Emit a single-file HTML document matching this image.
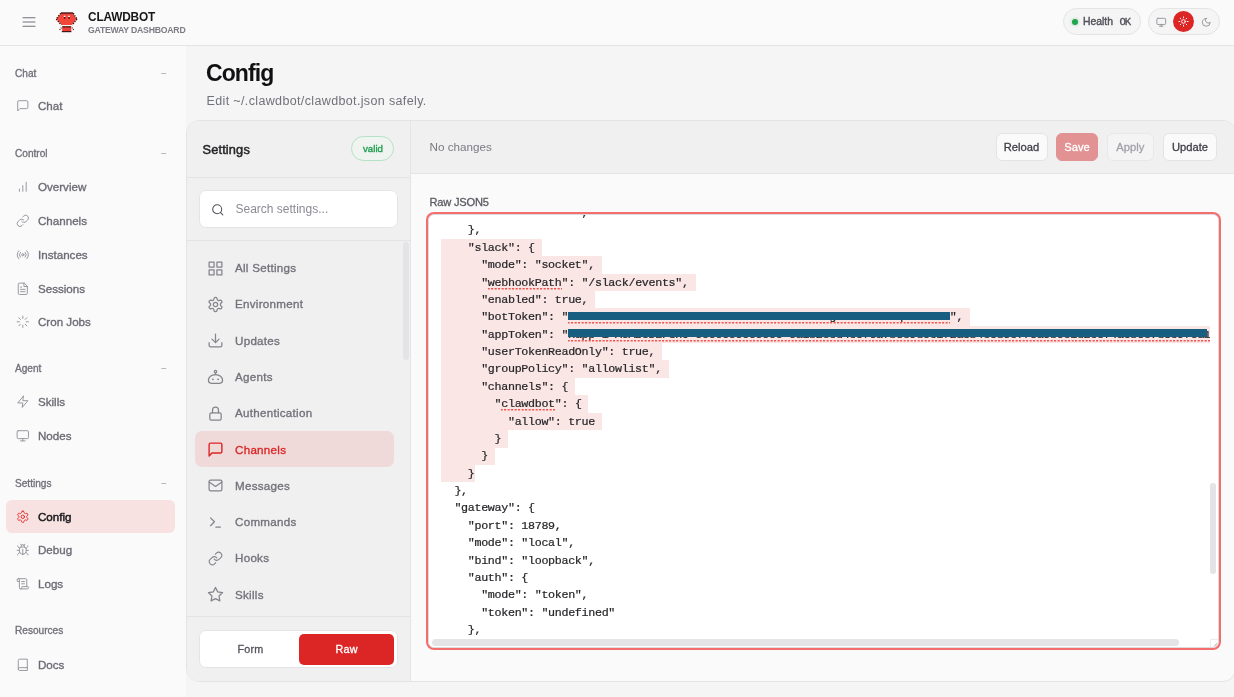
<!DOCTYPE html>
<html lang="en">
<head>
<meta charset="utf-8">
<title>Clawdbot Control</title>
<style>
*{box-sizing:border-box;margin:0;padding:0}
html,body{width:1234px;height:697px;overflow:hidden}
body{position:relative;background:#f5f5f5;font-family:"Liberation Sans",sans-serif;color:#3f3f46;-webkit-font-smoothing:antialiased}
#app{position:absolute;left:0;top:0;width:1234px;height:697px;overflow:hidden;will-change:transform}
.abs{position:absolute}
.t{position:absolute;white-space:nowrap;line-height:1;transform-origin:0 50%;transform:scaleX(var(--sx,1))}
.md{font-weight:normal!important;-webkit-text-stroke:.33px currentColor}
svg{display:block;overflow:visible}
.ic{position:absolute;fill:none;stroke:#71717a;stroke-width:1.6;stroke-linecap:round;stroke-linejoin:round;opacity:.78}

/* top bar */
#topbar{left:0;top:0;width:1234px;height:46px;background:#fafafa;border-bottom:1px solid #e4e4e7}
/* left nav */
#nav{left:0;top:46px;width:186px;height:651px;background:#fafafa}
.grp{letter-spacing:.1px;font-size:10.1px;font-weight:bold;color:#71717a;left:15px;letter-spacing:0}
.minus{font-size:10px;color:#a1a1aa;left:161px}
.ni{font-size:11.6px;font-weight:bold;color:#6b6b74;left:38px}
.nic{left:16px;width:13.6px;height:13.6px;stroke-width:1.6}
#nav-active{left:6.2px;top:454px;width:168.8px;height:33px;border-radius:6px;background:#f7e1e1}

/* card */
#card{left:186px;top:120px;width:1050px;height:562px;border:1px solid #e4e4e7;border-radius:13px;background:#fafafa;overflow:hidden}
#cside{left:0;top:0;width:224px;height:560px;background:#f0f0f0;border-right:1px solid #e4e4e7}
#cact{left:224px;top:0;width:826px;height:53px;background:#f0f0f0;border-bottom:1px solid #e4e4e7}
.si{font-size:11.6px;font-weight:bold;color:#71717a;left:48px;letter-spacing:.28px}
.sic{left:20.3px;width:17px;height:17px;stroke-width:1.75;opacity:.85}
.btn{position:absolute;top:12px;height:27.5px;border:1px solid #e4e4e7;border-radius:6px;background:#fafafa;font-size:11.2px;font-weight:normal;-webkit-text-stroke:.3px currentColor;color:#3f3f46;text-align:center;line-height:27.3px;white-space:nowrap}

/* code */
#ring{left:426px;top:212px;width:795px;height:438px;border-radius:8px;background:#f46e6e}
#ta{left:2px;top:2px;width:790.5px;height:434px;border:1px solid #dcdce0;border-radius:6px;background:#fff;overflow:hidden}
#code{left:12px;top:-10px;font-family:"Liberation Mono",monospace;font-size:11.7px;letter-spacing:-.32px;line-height:17.39px;color:#27272a;white-space:pre;-webkit-text-stroke:.22px #27272a}
#code div{height:17.39px}
.sel{position:absolute;left:12px;height:17.5px;background:#fbe6e6}
#code u{text-decoration:none;background-image:repeating-linear-gradient(90deg,#f0564f 0,#f0564f 1.300px,transparent 2.100px,transparent 2.700px,#f0564f 3.500px);background-size:100% 1.500px;background-repeat:no-repeat;background-position:0 calc(100% - .5px)}
.bar{position:absolute;background:#175e80;height:7.8px}
</style>
</head>
<body>
<div id="app">

<!-- ============ TOP BAR ============ -->
<div id="topbar" class="abs">
  <svg class="ic" style="left:22px;top:15px;width:14px;height:14px;opacity:1;stroke:#71717a;stroke-width:1.1" viewBox="0 0 14 14"><path d="M1 2.8h12M1 7h12M1 11.2h12"/></svg>
  <svg class="abs" style="left:50px;top:6px;width:34px;height:32px" viewBox="0 0 34 32">
    <polygon points="11.300,7 22.700,7 26.600,13 21.800,19 11.700,19 6.400,13" fill="#f2463b"/>
    <path d="M10.800 7.200L6.200 13M23.200 7.200L27 13M6.200 13l5 6M27 13l-4.800 6" fill="none" stroke="#3a0f0f" stroke-width="1.250" stroke-dasharray="1.400 1.100"/>
    <rect x="11" y="6.300" width="12" height="1.400" fill="#4a1515"/>
    <rect x="13.800" y="9.700" width="1.500" height="1.500" fill="#fff"/><rect x="18.200" y="9.700" width="1.500" height="1.500" fill="#fff"/>
    <rect x="13.900" y="11.100" width="1.400" height="1.600" fill="#2a0c0c"/><rect x="18.300" y="11.100" width="1.400" height="1.600" fill="#2a0c0c"/>
    <rect x="12.200" y="20.600" width="9" height="5" fill="#ee3f36"/>
    <rect x="12.200" y="20.200" width="9" height="1.200" fill="#4a1515"/>
    <rect x="11.800" y="25" width="9.600" height="1.200" fill="#4a1515"/>
    <path d="M11.400 21.600L9.400 24.200M21.900 21.600l2 2.600" stroke="#3a0f0f" stroke-width="1.100" stroke-dasharray="1 .9" fill="none"/>
  </svg>
  <div class="t" id="brand1" style="left:87.5px;top:9.8px;font-size:13.4px;font-weight:bold;color:#18181b;letter-spacing:-.2px;--sx:.885">CLAWDBOT</div>
  <div class="t" id="brand2" style="left:88px;top:25.6px;font-size:8.7px;font-weight:bold;color:#7b7b84;letter-spacing:-.22px">GATEWAY DASHBOARD</div>

  <div class="abs" style="left:1063px;top:7.5px;width:78px;height:27.5px;border:1px solid #e4e4e7;border-radius:14px;background:#f5f5f5"></div>
  <div class="abs" style="left:1072px;top:18.6px;width:6px;height:6px;border-radius:50%;background:#22a54a;box-shadow:0 0 3px rgba(34,165,74,.5)"></div>
  <div class="t" id="health" style="left:1083px;top:16.9px;font-size:10.4px;font-weight:normal;-webkit-text-stroke:.4px currentColor;letter-spacing:0;color:#52525b">Health</div>
  <div class="t" id="ok" style="left:1119.6px;top:16.8px;font-size:10.6px;font-family:'Liberation Mono',monospace;font-weight:normal;-webkit-text-stroke:.35px currentColor;color:#52525b;letter-spacing:-1.1px">OK</div>

  <div class="abs" style="left:1147.5px;top:7.5px;width:72px;height:27.5px;border:1px solid #e4e4e7;border-radius:14px;background:#f5f5f5"></div>
  <div class="abs" style="left:1173px;top:11px;width:21px;height:21px;border-radius:50%;background:#dc2626"></div>
  <svg class="ic" style="left:1156px;top:16.5px;width:10.5px;height:10.5px;stroke-width:2" viewBox="0 0 24 24"><rect x="2" y="3" width="20" height="14" rx="2"/><path d="M8 21h8M12 17v4"/></svg>
  <svg class="ic" style="left:1178px;top:16px;width:11px;height:11px;stroke:#fff;opacity:1;stroke-width:2" viewBox="0 0 24 24"><circle cx="12" cy="12" r="4"/><path d="M12 2v2M12 20v2M4.93 4.93l1.41 1.41M17.66 17.66l1.41 1.41M2 12h2M20 12h2M6.34 17.66l-1.41 1.41M19.07 4.93l-1.41 1.41"/></svg>
  <svg class="ic" style="left:1201px;top:16.5px;width:10.5px;height:10.5px;stroke-width:2" viewBox="0 0 24 24"><path d="M12 3a6 6 0 0 0 9 9 9 9 0 1 1-9-9Z"/></svg>
</div>

<!-- ============ LEFT NAV ============ -->
<div id="nav" class="abs">
  <div id="nav-active" class="abs"></div>
  <div class="t grp md" style="top:22.5px">Chat</div>
  <div class="t minus" style="top:22.6px">&minus;</div>
  <svg class="ic nic" style="top:53.2px" viewBox="0 0 24 24"><path d="M21 15a2 2 0 0 1-2 2H7l-4 4V5a2 2 0 0 1 2-2h14a2 2 0 0 1 2 2z"/></svg>
  <div class="t ni md" style="top:54.0px">Chat</div>
  <div class="t grp md" style="top:102.5px">Control</div>
  <div class="t minus" style="top:102.6px">&minus;</div>
  <svg class="ic nic" style="top:134.2px" viewBox="0 0 24 24"><path d="M12 20V10M18 20V4M6 20v-4"/></svg>
  <div class="t ni md" style="top:135.0px">Overview</div>
  <svg class="ic nic" style="top:168.2px" viewBox="0 0 24 24"><path d="M10 13a5 5 0 0 0 7.54.54l3-3a5 5 0 0 0-7.07-7.07l-1.72 1.71"/><path d="M14 11a5 5 0 0 0-7.54-.54l-3 3a5 5 0 0 0 7.07 7.07l1.71-1.71"/></svg>
  <div class="t ni md" style="top:169.0px">Channels</div>
  <svg class="ic nic" style="top:201.9px" viewBox="0 0 24 24"><circle cx="12" cy="12" r="2"/><path d="M16.24 7.76a6 6 0 0 1 0 8.49M7.76 16.24a6 6 0 0 1 0-8.49M19.07 4.93a10 10 0 0 1 0 14.14M4.93 19.07a10 10 0 0 1 0-14.14"/></svg>
  <div class="t ni md" style="top:202.7px">Instances</div>
  <svg class="ic nic" style="top:235.7px" viewBox="0 0 24 24"><path d="M14 2H6a2 2 0 0 0-2 2v16a2 2 0 0 0 2 2h12a2 2 0 0 0 2-2V8z"/><path d="M14 2v6h6M16 13H8M16 17H8M10 9H8"/></svg>
  <div class="t ni md" style="top:236.5px">Sessions</div>
  <svg class="ic nic" style="top:269.2px" viewBox="0 0 24 24"><path d="M12 2v4M12 18v4M4.93 4.93l2.83 2.83M16.24 16.24l2.83 2.83M2 12h4M18 12h4M4.93 19.07l2.83-2.83M16.24 7.76l2.83-2.83"/></svg>
  <div class="t ni md" style="top:270.0px">Cron Jobs</div>
  <div class="t grp md" style="top:318.0px">Agent</div>
  <div class="t minus" style="top:318.1px">&minus;</div>
  <svg class="ic nic" style="top:349.2px" viewBox="0 0 24 24"><path d="M13 2 3 14h9l-1 8 10-12h-9l1-8z"/></svg>
  <div class="t ni md" style="top:350.0px">Skills</div>
  <svg class="ic nic" style="top:383.2px" viewBox="0 0 24 24"><rect x="2" y="3" width="20" height="14" rx="2"/><path d="M8 21h8M12 17v4"/></svg>
  <div class="t ni md" style="top:384.0px">Nodes</div>
  <div class="t grp md" style="top:432.5px">Settings</div>
  <div class="t minus" style="top:432.6px">&minus;</div>
  <svg class="ic nic" style="top:463.7px;stroke:#dc2626;opacity:1" viewBox="0 0 24 24"><path d="M12.22 2h-.44a2 2 0 0 0-2 2v.18a2 2 0 0 1-1 1.73l-.43.25a2 2 0 0 1-2 0l-.15-.08a2 2 0 0 0-2.73.73l-.22.38a2 2 0 0 0 .73 2.73l.15.1a2 2 0 0 1 1 1.72v.51a2 2 0 0 1-1 1.74l-.15.09a2 2 0 0 0-.73 2.73l.22.38a2 2 0 0 0 2.73.73l.15-.08a2 2 0 0 1 2 0l.43.25a2 2 0 0 1 1 1.73V20a2 2 0 0 0 2 2h.44a2 2 0 0 0 2-2v-.18a2 2 0 0 1 1-1.73l.43-.25a2 2 0 0 1 2 0l.15.08a2 2 0 0 0 2.73-.73l.22-.39a2 2 0 0 0-.73-2.73l-.15-.08a2 2 0 0 1-1-1.74v-.5a2 2 0 0 1 1-1.74l.15-.09a2 2 0 0 0 .73-2.73l-.22-.38a2 2 0 0 0-2.73-.73l-.15.08a2 2 0 0 1-2 0l-.43-.25a2 2 0 0 1-1-1.73V4a2 2 0 0 0-2-2z"/><circle cx="12" cy="12" r="3"/></svg>
  <div class="t ni md" style="top:464.5px;color:#18181b;-webkit-text-stroke:.45px currentColor">Config</div>
  <svg class="ic nic" style="top:497.2px" viewBox="0 0 24 24"><path d="m8 2 1.88 1.88M14.12 3.88 16 2M9 7.13v-1a3.003 3.003 0 1 1 6 0v1"/><path d="M12 20c-3.3 0-6-2.7-6-6v-3a4 4 0 0 1 4-4h4a4 4 0 0 1 4 4v3c0 3.3-2.7 6-6 6M12 20v-9M6.53 9C4.6 8.8 3 7.1 3 5M6 13H2M3 21c0-2.1 1.700-3.900 3.800-4M20.970 5c0 2.100-1.600 3.800-3.500 4M22 13h-4M17.200 17c2.100.1 3.800 1.900 3.800 4"/></svg>
  <div class="t ni md" style="top:498.0px">Debug</div>
  <svg class="ic nic" style="top:531.2px" viewBox="0 0 24 24"><path d="M15 12h-5M15 8h-5M19 17V5a2 2 0 0 0-2-2H4"/><path d="M8 21h12a2 2 0 0 0 2-2v-1a1 1 0 0 0-1-1H11a1 1 0 0 0-1 1v1a2 2 0 1 1-4 0V5a2 2 0 1 0-4 0v2a1 1 0 0 0 1 1h3"/></svg>
  <div class="t ni md" style="top:532.0px">Logs</div>
  <div class="t grp md" style="top:579.9px">Resources</div>
  <svg class="ic nic" style="top:611.7px" viewBox="0 0 24 24"><path d="M4 19.500v-15A2.500 2.500 0 0 1 6.500 2H20v20H6.500a2.500 2.500 0 0 1 0-5H20"/></svg>
  <div class="t ni md" style="top:612.5px">Docs</div>
</div>

<!-- ============ PAGE HEADER ============ -->
<div class="t" id="title" style="left:206px;top:61.7px;font-size:23px;font-weight:bold;color:#111113;letter-spacing:-.9px">Config</div>
<div class="t" id="subtitle" style="left:206.5px;top:94.5px;font-size:12.5px;letter-spacing:.36px;color:#71717a">Edit ~/.clawdbot/clawdbot.json safely.</div>

<!-- ============ CARD ============ -->
<div id="card" class="abs">
  <div id="cside" class="abs">
    <div class="t" id="settings" style="left:15.5px;top:22.8px;font-size:12.8px;font-weight:normal;-webkit-text-stroke:.5px currentColor;letter-spacing:.15px;color:#27272a">Settings</div>
    <div class="abs" style="left:164.4px;top:14.8px;width:43px;height:25px;border:1px solid #b4e2c4;border-radius:13px;background:#eff4f0"></div>
    <div class="t" id="valid" style="left:176px;top:22.9px;font-size:9.7px;font-weight:normal;-webkit-text-stroke:.35px currentColor;color:#1f9d4d">valid</div>
    <div class="abs" style="left:0;top:56px;width:223px;height:1px;background:#e4e4e7"></div>
    <div class="abs" style="left:12px;top:69px;width:199px;height:38px;border:1px solid #e4e4e7;border-radius:7px;background:#fff"></div>
    <svg class="ic" style="left:24px;top:81.5px;width:13.5px;height:13.5px;opacity:1;stroke:#52525b;stroke-width:1.9" viewBox="0 0 24 24"><circle cx="11" cy="11" r="8"/><path d="m21 21-4.300-4.300"/></svg>
    <div class="t" id="search" style="left:48.5px;top:82px;font-size:12px;color:#8b8b94">Search settings...</div>
    <div class="abs" style="left:0;top:119px;width:223px;height:1px;background:#e4e4e7"></div>
    <div class="abs" style="left:216.3px;top:120.5px;width:6px;height:118px;border-radius:3px;background:#e4e4e7"></div>
    <div class="abs" style="left:7.7px;top:310.3px;width:199px;height:35.7px;border-radius:7px;background:#efd9d9"></div>
    <svg class="ic sic" style="top:138.5px" viewBox="0 0 24 24"><rect x="3" y="3" width="7" height="7"/><rect x="14" y="3" width="7" height="7"/><rect x="14" y="14" width="7" height="7"/><rect x="3" y="14" width="7" height="7"/></svg>
    <div class="t si md" style="top:141.0px">All Settings</div>
    <svg class="ic sic" style="top:174.8px" viewBox="0 0 24 24"><path d="M12.22 2h-.44a2 2 0 0 0-2 2v.18a2 2 0 0 1-1 1.73l-.43.25a2 2 0 0 1-2 0l-.15-.08a2 2 0 0 0-2.73.73l-.22.38a2 2 0 0 0 .73 2.73l.15.1a2 2 0 0 1 1 1.72v.51a2 2 0 0 1-1 1.74l-.15.09a2 2 0 0 0-.73 2.73l.22.38a2 2 0 0 0 2.73.73l.15-.08a2 2 0 0 1 2 0l.43.25a2 2 0 0 1 1 1.73V20a2 2 0 0 0 2 2h.44a2 2 0 0 0 2-2v-.18a2 2 0 0 1 1-1.73l.43-.25a2 2 0 0 1 2 0l.15.08a2 2 0 0 0 2.73-.73l.22-.39a2 2 0 0 0-.73-2.73l-.15-.08a2 2 0 0 1-1-1.74v-.5a2 2 0 0 1 1-1.74l.15-.09a2 2 0 0 0 .73-2.73l-.22-.38a2 2 0 0 0-2.73-.73l-.15.08a2 2 0 0 1-2 0l-.43-.25a2 2 0 0 1-1-1.73V4a2 2 0 0 0-2-2z"/><circle cx="12" cy="12" r="3"/></svg>
    <div class="t si md" style="top:177.3px">Environment</div>
    <svg class="ic sic" style="top:211.1px" viewBox="0 0 24 24"><path d="M21 15v4a2 2 0 0 1-2 2H5a2 2 0 0 1-2-2v-4M7 10l5 5 5-5M12 15V3"/></svg>
    <div class="t si md" style="top:213.6px">Updates</div>
    <svg class="ic sic" style="top:247.5px" viewBox="0 0 24 24"><circle cx="12" cy="3.800" r="1.700"/><path d="M12 5.500v2.300"/><path d="M12 7.800c-5.800 0-10 3.600-10 8.200 0 2.600 1.600 4.200 4.200 4.200h11.600c2.600 0 4.200-1.600 4.200-4.200 0-4.600-4.200-8.200-10-8.200z"/><circle cx="8.300" cy="14.600" r="1.300" fill="#71717a" stroke="none"/><circle cx="15.700" cy="14.600" r="1.300" fill="#71717a" stroke="none"/></svg>
    <div class="t si md" style="top:250.0px">Agents</div>
    <svg class="ic sic" style="top:283.7px" viewBox="0 0 24 24"><rect x="4" y="11" width="16" height="10.500" rx="2"/><path d="M7.800 11V7.200a4.200 4.200 0 0 1 8.400 0V11"/></svg>
    <div class="t si md" style="top:286.2px">Authentication</div>
    <svg class="ic sic" style="top:320.0px;stroke:#dc2626;opacity:1;stroke-width:2" viewBox="0 0 24 24"><path d="M21 15a2 2 0 0 1-2 2H7l-4 4V5a2 2 0 0 1 2-2h14a2 2 0 0 1 2 2z"/></svg>
    <div class="t si md" style="top:322.5px;color:#dc2626">Channels</div>
    <svg class="ic sic" style="top:356.2px" viewBox="0 0 24 24"><rect x="3" y="4.500" width="18" height="15" rx="2"/><path d="m21 7-9 6.300L3 7"/></svg>
    <div class="t si md" style="top:358.7px">Messages</div>
    <svg class="ic sic" style="top:392.5px" viewBox="0 0 24 24"><path d="m5 16.500 5.500-5.500L5 5.500M12.500 18.500h6.500"/></svg>
    <div class="t si md" style="top:395.0px">Commands</div>
    <svg class="ic sic" style="top:428.7px" viewBox="0 0 24 24"><g transform="translate(12 12) scale(.88) translate(-12 -12)"><path d="M10 13a5 5 0 0 0 7.54.54l3-3a5 5 0 0 0-7.07-7.07l-1.72 1.71"/><path d="M14 11a5 5 0 0 0-7.54-.54l-3 3a5 5 0 0 0 7.07 7.07l1.71-1.71"/></g></svg>
    <div class="t si md" style="top:431.2px">Hooks</div>
    <svg class="ic sic" style="top:465.0px" viewBox="0 0 24 24"><path d="m12 2 3.090 6.260L22 9.270l-5 4.870 1.180 6.880L12 17.770l-6.180 3.250L7 14.140 2 9.270l6.910-1.010L12 2z"/></svg>
    <div class="t si md" style="top:467.5px">Skills</div>
    <div class="abs" style="left:0;top:495px;width:223px;height:1px;background:#e4e4e7"></div>
    <div class="abs" style="left:12px;top:509px;width:199px;height:38px;border:1px solid #e4e4e7;border-radius:7px;background:#fff"></div>
    <div class="abs" style="left:111.5px;top:513px;width:95.500px;height:31px;border-radius:5px;background:#dc2626"></div>
    <div class="t" id="form" style="left:50.5px;top:523px;font-size:10.8px;font-weight:normal;-webkit-text-stroke:.3px currentColor;letter-spacing:.2px;color:#52525b">Form</div>
    <div class="t" id="raw" style="left:148.5px;top:523px;font-size:10.8px;font-weight:normal;-webkit-text-stroke:.3px currentColor;letter-spacing:.2px;color:#fff">Raw</div>
  </div>
  <div id="cact" class="abs">
    <div class="t" id="nochanges" style="left:18.5px;top:20.3px;font-size:11.7px;color:#7a7a83">No changes</div>
    <div class="btn" id="b1" style="left:584.5px;width:52px">Reload</div>
    <div class="btn" id="b2" style="left:645px;width:42px;background:#e39294;border-color:#e39294;color:#fff">Save</div>
    <div class="btn" id="b3" style="left:696px;width:46.5px;background:#f4f4f4;border-color:#e8e8ea;color:#a1a1aa">Apply</div>
    <div class="btn" id="b4" style="left:752px;width:54px">Update</div>
  </div>
</div>

<!-- ============ EDITOR ============ -->
<div class="t" id="rawlabel" style="left:429.5px;top:196.8px;font-size:11.1px;font-weight:normal;-webkit-text-stroke:.3px currentColor;color:#5a5a63;letter-spacing:-.2px">Raw JSON5</div>
<div id="ring" class="abs">
  <div id="ta" class="abs">
<!--CODE-->
    <div class="sel" style="top:23.75px;width:100.5px"></div>
    <div class="sel" style="top:41.14px;width:160.8px"></div>
    <div class="sel" style="top:58.53px;width:254.6px"></div>
    <div class="sel" style="top:75.92px;width:154.1px"></div>
    <div class="sel" style="top:93.31px;width:529.3px"></div>
    <div class="sel" style="top:110.70px;width:768.5px"></div>
    <div class="sel" style="top:128.09px;width:221.1px"></div>
    <div class="sel" style="top:145.48px;width:227.8px"></div>
    <div class="sel" style="top:162.87px;width:134.0px"></div>
    <div class="sel" style="top:180.26px;width:147.4px"></div>
    <div class="sel" style="top:197.65px;width:160.8px"></div>
    <div class="sel" style="top:215.04px;width:67.0px"></div>
    <div class="sel" style="top:232.43px;width:53.6px"></div>
    <div class="sel" style="top:249.82px;width:33.5px"></div>
    <div id="code" class="abs"><div>                     ,</div><div>    },</div><div>    "slack": {</div><div>      "mode": "socket",</div><div>      "<u>webhookPath</u>": "/slack/events",</div><div>      "enabled": true,</div><div>      "botToken": "<u>xoxb-0000000000000-0000000000000-aBcDeFgHiJkLmNoPqRsTuVwX</u>",</div><div>      "appToken": "<u>xapp-1-A0ABCDEFGHJ-0000000000000-0a1b2c3d4e5f6a7b8c9d0e1f2a3b4c5d6e7f8a9b0c1d2e3f4a5b6c7d8e9f0a1b2c3d4e5f6a7b8c9d0</u>",</div><div>      "userTokenReadOnly": true,</div><div>      "groupPolicy": "allowlist",</div><div>      "channels": {</div><div>        "<u>clawdbot</u>": {</div><div>          "allow": true</div><div>        }</div><div>      }</div><div>    }</div><div>  },</div><div>  "gateway": {</div><div>    "port": 18789,</div><div>    "mode": "local",</div><div>    "bind": "loopback",</div><div>    "auth": {</div><div>      "mode": "token",</div><div>      "token": "undefined"</div><div>    },</div><div>    "tailscale": {</div></div>
    <div class="bar" id="bar1" style="left:139px;top:97px;width:382px"></div>
    <div class="bar" id="bar2" style="left:139px;top:114px;width:638.5px"></div>
    <div class="abs" id="vtrack" style="left:780.5px;top:0;width:9px;height:432px;background:#fff"></div>
    <div class="abs" id="htrack" style="left:0;top:423px;width:789px;height:9px;background:#fff"></div>
    <div class="abs" id="vthumb" style="left:780.5px;top:267.5px;width:6.5px;height:91.5px;border-radius:3.5px;background:#e4e4e7"></div>
    <div class="abs" id="hthumb" style="left:3px;top:424px;width:747px;height:6.5px;border-radius:3.5px;background:#e4e4e7"></div>
    <div class="abs" style="left:780.5px;top:423.5px;width:9px;height:9px;border-left:1px solid #ececee;border-top:1px solid #ececee;background:#fff"></div>
    <svg class="abs" style="left:783.5px;top:426.5px;width:5px;height:5px" viewBox="0 0 5 5"><path d="M4.600 .9L.9 4.600M4.600 3l-1.600 1.600" stroke="#8a8a93" stroke-width=".8" fill="none"/></svg>
<!--/CODE-->
  </div>
</div>

</div>
</body>
</html>
